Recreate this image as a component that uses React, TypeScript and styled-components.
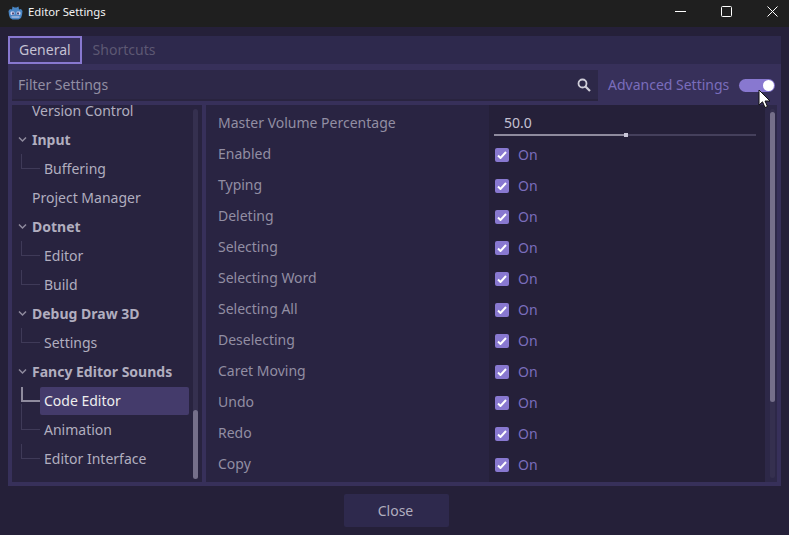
import styled, { createGlobalStyle } from "styled-components";

const GlobalStyle = createGlobalStyle`
  html, body {
    margin: 0;
    padding: 0;
    background: #252039;
  }
  body {
    font-family: "Noto Sans", "DejaVu Sans", sans-serif;
  }
`;

const Window = styled.div`
  position: relative;
  width: 789px;
  height: 535px;
  overflow: hidden;
  display: flex;
  flex-direction: column;
  background: #252039;
`;

const TitleBar = styled.div`
  box-sizing: border-box;
  height: 27px;
  flex: none;
  background: #1f1f1f;
  display: flex;
  align-items: center;
  padding: 0 0 3px 8px;
`;

const TitleText = styled.span`
  margin: 0 0 2px 5px;
  font-size: 11.3px;
  color: #f2f2f2;
`;

const WindowButtons = styled.div`
  margin: 0 -6px 2px auto;
  display: flex;
`;

const WindowButton = styled.div`
  width: 46px;
  height: 24px;
  display: flex;
  align-items: center;
  justify-content: center;
  color: #ffffff;
`;

const Body = styled.div`
  flex: 1;
  display: flex;
  flex-direction: column;
  padding: 9px 8px 0;
`;

const TabBar = styled.div`
  height: 28px;
  flex: none;
  display: flex;
  background: #2e294d;
`;

const Tab = styled.div<{ $active?: boolean }>`
  box-sizing: border-box;
  height: 28px;
  display: flex;
  align-items: center;
  padding: 0 9px 2px;
  font-size: 14px;
  color: ${({ $active }) => ($active ? "#c4c1d3" : "#5d5873")};
  border: ${({ $active }) => ($active ? "2px solid #8878d0" : "2px solid transparent")};
  background: ${({ $active }) => ($active ? "#37305a" : "transparent")};
`;

const Panel = styled.div`
  height: 422px;
  flex: none;
  box-sizing: border-box;
  display: flex;
  flex-direction: column;
  padding: 6px 4px 4px;
  background: #37305a;
`;

const FilterRow = styled.div`
  height: 31px;
  flex: none;
  display: flex;
  align-items: center;
`;

const FilterInput = styled.div`
  box-sizing: border-box;
  width: 586px;
  height: 31px;
  flex: none;
  display: flex;
  align-items: center;
  justify-content: space-between;
  padding: 0 7px 0 6px;
  font-size: 14px;
  color: #928ea3;
  background: #2d2848;
  border-bottom: 2px solid #29243f;
`;

const AdvancedLabel = styled.span`
  margin-left: 10px;
  padding-bottom: 2px;
  font-size: 14px;
  white-space: nowrap;
  color: #7a6dbc;
`;

const Toggle = styled.div`
  position: relative;
  width: 36px;
  height: 13px;
  flex: none;
  margin-left: auto;
  margin-right: 2px;
  border-radius: 7px;
  background: #8878d0;
  &::after {
    content: "";
    position: absolute;
    right: 1px;
    top: 1px;
    width: 11px;
    height: 11px;
    border-radius: 50%;
    background: #ffffff;
  }
`;

const Columns = styled.div`
  flex: 1;
  min-height: 0;
  margin-top: 4px;
  display: flex;
  gap: 4px;
`;

const TreePane = styled.div`
  position: relative;
  width: 190px;
  flex: none;
  overflow: hidden;
  background: #28233f;
`;

const TreeList = styled.div`
  margin-top: -9px;
  padding-left: 4px;
`;

const TreeRow = styled.div<{ $depth: number; $guide?: boolean }>`
  position: relative;
  height: 29px;
  display: flex;
  align-items: center;
  padding-left: ${({ $depth }) => ($depth === 2 ? 28 : 16)}px;
  font-size: 14px;
  color: #b1aebf;
  white-space: nowrap;
  ${({ $depth }) => $depth === 0 && "font-weight: 700;"}
  ${({ $guide }) =>
    $guide &&
    `&::before {
      content: "";
      position: absolute;
      left: 5px;
      top: 0;
      width: 18px;
      height: 14px;
      border-left: 1px solid #3f3a58;
      border-bottom: 1px solid #3f3a58;
    }`}
`;

const Arrow = styled.svg`
  position: absolute;
  left: 2px;
  top: 11px;
`;

const SelectedName = styled.div`
  height: 28px;
  width: 149px;
  flex: none;
  margin: 1px 0 0 -4px;
  box-sizing: border-box;
  padding: 0 0 1px 4px;
  display: flex;
  align-items: center;
  color: #eeeeee;
  background: #443b6b;
  border-radius: 2px;
`;

const ActiveGuide = styled.div`
  position: absolute;
  left: 5px;
  top: 1px;
  width: 17px;
  height: 13px;
  border-left: 2px solid #8f8b9e;
  border-bottom: 2px solid #8f8b9e;
  &::after {
    content: "";
    position: absolute;
    left: -2px;
    top: 17px;
    width: 1px;
    height: 12px;
    background: #3f3a58;
  }
`;

const Scrollbar = styled.div<{ $left: number; $top: number; $height: number }>`
  position: absolute;
  left: ${({ $left }) => $left}px;
  top: 4px;
  bottom: 4px;
  width: 5px;
  border-radius: 3px;
  background: #35304f;
  &::after {
    content: "";
    position: absolute;
    left: 0;
    right: 0;
    top: ${({ $top }) => $top}px;
    height: ${({ $height }) => $height}px;
    border-radius: 3px;
    background: #756f8a;
  }
`;

const SettingsPane = styled.div`
  position: relative;
  flex: 1;
  min-width: 0;
  overflow: hidden;
  display: flex;
  background: #252039;
`;

const SettingsGrid = styled.div`
  width: 559px;
  flex: none;
  padding-top: 3px;
  background: linear-gradient(90deg, #292442 283px, transparent 283px);
`;

const SettingRow = styled.div`
  height: 31px;
  display: flex;
  align-items: center;
`;

const SettingName = styled.div`
  width: 283px;
  flex: none;
  padding-left: 12px;
  box-sizing: border-box;
  font-size: 14px;
  color: #928ea3;
  margin-top: -2px;
`;

const SettingValue = styled.div`
  flex: 1;
  display: flex;
  align-items: center;
  padding-left: 6px;
`;

const SliderValue = styled.div`
  flex: 1;
  margin-right: 9px;
  margin-left: 5px;
  font-size: 14px;
  color: #c4c1d3;
  padding: 0 0 0 10px;
  position: relative;
  height: 24px;
  line-height: 21px;
  box-sizing: border-box;
`;

const SliderTrack = styled.div`
  position: absolute;
  left: 0;
  right: 0;
  bottom: 0;
  height: 2px;
  background: #45405c;
`;

const SliderFill = styled.div<{ $percent: number }>`
  height: 100%;
  width: ${({ $percent }) => $percent}%;
  background: #8f8b9e;
  position: relative;
  &::after {
    content: "";
    position: absolute;
    right: -2px;
    top: -1px;
    width: 4px;
    height: 4px;
    background: #c9c6d8;
  }
`;

const CheckBox = styled.div`
  width: 14px;
  height: 14px;
  border-radius: 2px;
  background: #8878d0;
  display: flex;
  align-items: center;
  justify-content: center;
`;

const CheckLabel = styled.span`
  margin-left: 9px;
  font-size: 14px;
  color: #7a6dbc;
`;

const Gutter = styled.div`
  flex: 1;
  background: #2d2848;
`;

const Footer = styled.div`
  flex: 1;
  display: flex;
  justify-content: center;
  padding: 8px 0 0 4px;
`;

const CloseButton = styled.div`
  width: 105px;
  height: 33px;
  display: flex;
  align-items: center;
  justify-content: center;
  padding-right: 2px;
  box-sizing: border-box;
  font-size: 14px;
  color: #b1aebf;
  background: #2e294d;
  border-radius: 2px;
`;

const Cursor = styled.svg`
  position: absolute;
  left: 758px;
  top: 89px;
`;

const tree: { label: string; depth: number; open?: boolean; guide?: boolean; selected?: boolean }[] = [
  { label: "Version Control", depth: 1 },
  { label: "Input", depth: 0, open: true },
  { label: "Buffering", depth: 2, guide: true },
  { label: "Project Manager", depth: 1 },
  { label: "Dotnet", depth: 0, open: true },
  { label: "Editor", depth: 2, guide: true },
  { label: "Build", depth: 2, guide: true },
  { label: "Debug Draw 3D", depth: 0, open: true },
  { label: "Settings", depth: 2, guide: true },
  { label: "Fancy Editor Sounds", depth: 0, open: true },
  { label: "Code Editor", depth: 2, selected: true },
  { label: "Animation", depth: 2, guide: true },
  { label: "Editor Interface", depth: 2, guide: true },
];

const settings = [
  "Enabled",
  "Typing",
  "Deleting",
  "Selecting",
  "Selecting Word",
  "Selecting All",
  "Deselecting",
  "Caret Moving",
  "Undo",
  "Redo",
  "Copy",
];

function GodotIcon() {
  return (
    <svg width="15" height="15" viewBox="0 0 15 15">
      <path d="M0.5 6 L2 4 L4 4.5 L4.5 1.5 L6.5 2.5 L8.5 2.5 L10.5 1.5 L11 4.5 L13 4 L14.5 6 L14 10 L13 13 L10.5 14.5 L4.5 14.5 L2 13 L1 10 Z" fill="#4a86c4" />
      <rect x="2.5" y="6.5" width="4" height="3.5" rx="1.2" fill="#d5d3ec" />
      <rect x="8.5" y="6.5" width="4" height="3.5" rx="1.2" fill="#d5d3ec" />
      <rect x="4" y="7.5" width="2" height="2" fill="#4b4a78" />
      <rect x="9" y="7.5" width="2" height="2" fill="#4b4a78" />
      <path d="M3.5 12 H11.5" stroke="#d5d3ec" strokeWidth="1" />
    </svg>
  );
}

export default function App() {
  return (
    <>
      <GlobalStyle />
      <Window>
        <TitleBar>
          <GodotIcon />
          <TitleText>Editor Settings</TitleText>
          <WindowButtons>
            <WindowButton>
              <svg width="11" height="11" viewBox="0 0 11 11"><path d="M0 5.5H11" stroke="currentColor" /></svg>
            </WindowButton>
            <WindowButton>
              <svg width="11" height="11" viewBox="0 0 11 11"><rect x="0.5" y="0.5" width="10" height="10" rx="1" fill="none" stroke="currentColor" /></svg>
            </WindowButton>
            <WindowButton>
              <svg width="11" height="11" viewBox="0 0 11 11"><path d="M0.5 0.5L10.5 10.5M10.5 0.5L0.5 10.5" stroke="currentColor" /></svg>
            </WindowButton>
          </WindowButtons>
        </TitleBar>
        <Body>
          <TabBar>
            <Tab $active>General</Tab>
            <Tab>Shortcuts</Tab>
          </TabBar>
          <Panel>
            <FilterRow>
              <FilterInput>
                Filter Settings
                <svg width="14" height="14" viewBox="0 0 14 14" fill="none" stroke="#d0ced9">
                  <circle cx="5.5" cy="5.5" r="4" strokeWidth="1.8" />
                  <path d="M8.5 8.5L13 13" strokeWidth="2.2" />
                </svg>
              </FilterInput>
              <AdvancedLabel>Advanced Settings</AdvancedLabel>
              <Toggle />
            </FilterRow>
            <Columns>
              <TreePane>
                <TreeList>
                  {tree.map((item) => (
                    <TreeRow key={item.label} $depth={item.depth} $guide={item.guide}>
                      {item.open && (
                        <Arrow width="9" height="7" viewBox="0 0 9 7" fill="none" stroke="#8f8b9e" strokeWidth="1.5">
                          <path d="M1 1.5L4.5 5L8 1.5" />
                        </Arrow>
                      )}
                      {item.selected ? (
                        <>
                          <ActiveGuide />
                          <SelectedName>{item.label}</SelectedName>
                        </>
                      ) : (
                        item.label
                      )}
                    </TreeRow>
                  ))}
                </TreeList>
                <Scrollbar $left={181} $top={301} $height={69} />
              </TreePane>
              <SettingsPane>
                <SettingsGrid>
                  <SettingRow>
                    <SettingName>Master Volume Percentage</SettingName>
                    <SliderValue>
                      50.0
                      <SliderTrack>
                        <SliderFill $percent={50.5} />
                      </SliderTrack>
                    </SliderValue>
                  </SettingRow>
                  {settings.map((name) => (
                    <SettingRow key={name}>
                      <SettingName>{name}</SettingName>
                      <SettingValue>
                        <CheckBox>
                          <svg width="10" height="8" viewBox="0 0 10 8" fill="none" stroke="#ffffff" strokeWidth="2">
                            <path d="M1 4.5L3.5 7L9 1" />
                          </svg>
                        </CheckBox>
                        <CheckLabel>On</CheckLabel>
                      </SettingValue>
                    </SettingRow>
                  ))}
                </SettingsGrid>
                <Gutter />
                <Scrollbar $left={564} $top={3} $height={290} />
              </SettingsPane>
            </Columns>
          </Panel>
          <Footer>
            <CloseButton>Close</CloseButton>
          </Footer>
        </Body>
        <Cursor width="14" height="20" viewBox="0 0 14 20">
          <path d="M1 1V16L4.5 12.8L7 18.5L9.5 17.5L7 12H12Z" fill="#ffffff" stroke="#111111" />
        </Cursor>
      </Window>
    </>
  );
}
